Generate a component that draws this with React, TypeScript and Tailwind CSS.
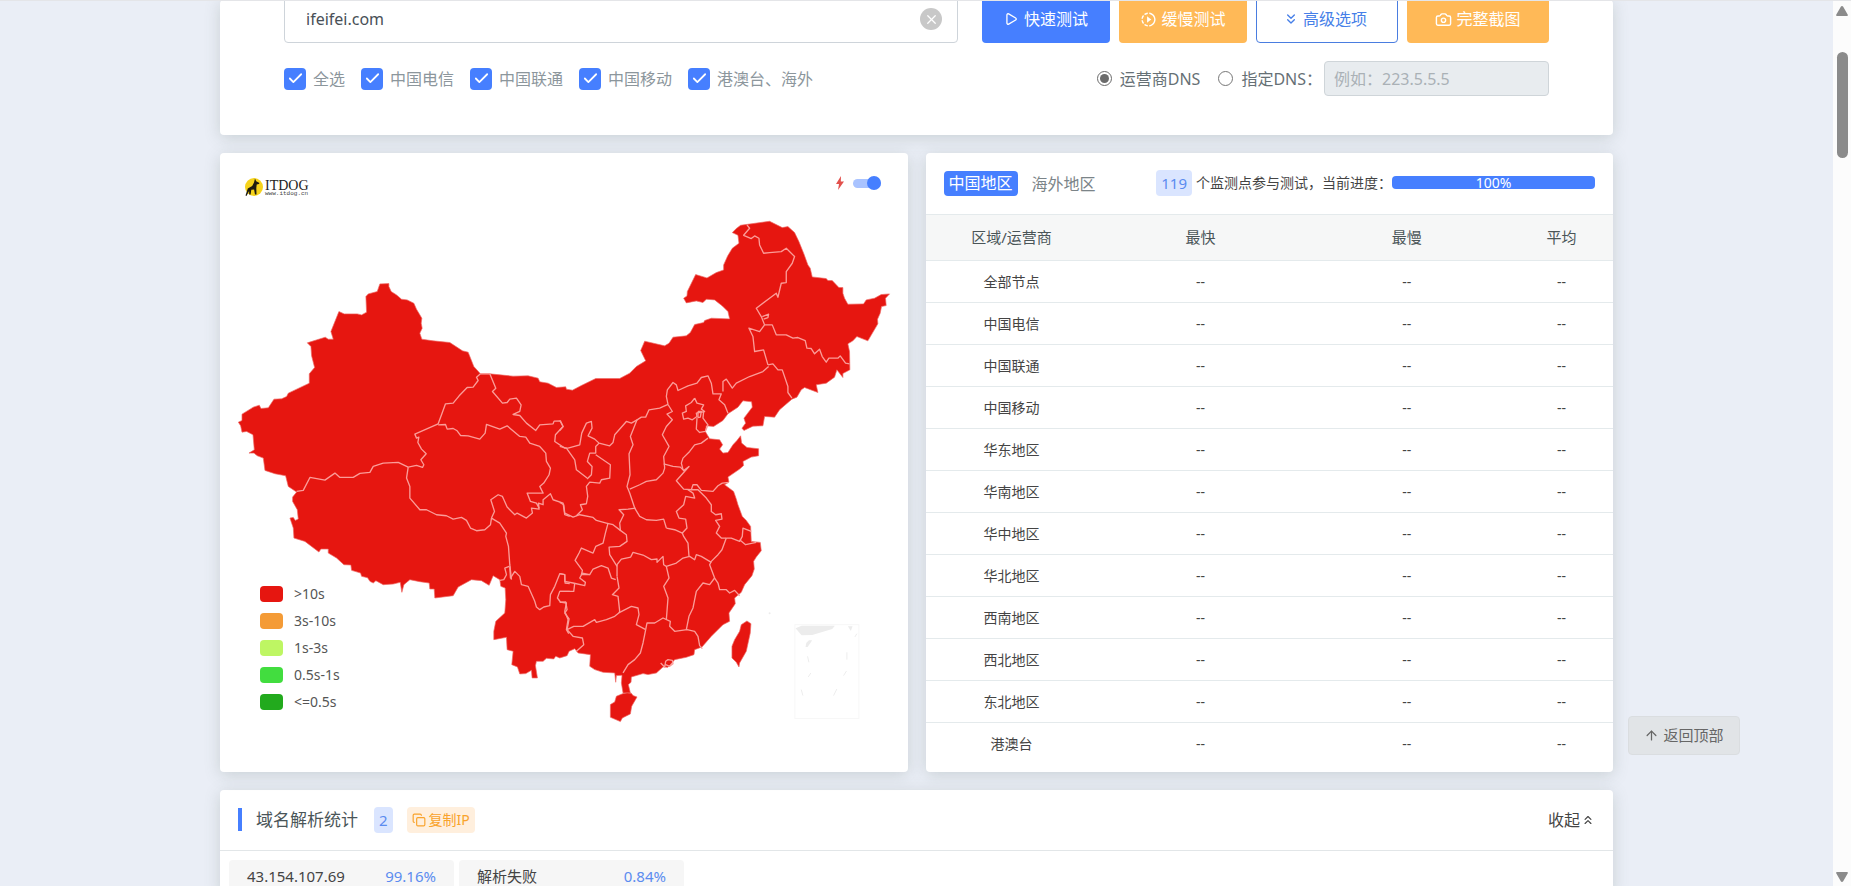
import { useState } from "react";
import { ArrowUp, Camera, Check, ChevronsDown, ChevronsUp, Copy, Play, X } from "lucide-react";
import { MdSlowMotionVideo } from "react-icons/md";

const carriers = ["全选", "中国电信", "中国联通", "中国移动", "港澳台、海外"];

const regions = [
    "全部节点",
    "中国电信",
    "中国联通",
    "中国移动",
    "华东地区",
    "华南地区",
    "华中地区",
    "华北地区",
    "西南地区",
    "西北地区",
    "东北地区",
    "港澳台",
];

const legend = [
    { label: ">10s", color: "bg-[#e61610]" },
    { label: "3s-10s", color: "bg-[#f49b36]" },
    { label: "1s-3s", color: "bg-[#bef663]" },
    { label: "0.5s-1s", color: "bg-[#42dd3f]" },
    { label: "<=0.5s", color: "bg-[#22aa1d]" },
];

const stats = [
    { name: "43.154.107.69", value: "99.16%" },
    { name: "解析失败", value: "0.84%" },
];

const mainland =
    "480,402 507,401 507,410 514,425 530,435 545,448 562,450 582,460 590,478 606,505 604,520 607,535 600,550 606,568 640,573 690,578 728,603 745,607 762,650 782,672 810,672 880,679 925,678 955,685 960,696 985,700 1010,713 1038,711 1040,718 1058,721 1085,707 1128,686 1200,686 1230,670 1250,650 1278,633 1263,602 1275,574 1335,588 1348,580 1360,562 1400,558 1412,548 1425,524 1452,518 1455,512 1475,505 1530,507 1525,485 1508,468 1485,450 1460,448 1450,458 1430,453 1400,459 1392,445 1402,438 1403,425 1428,374 1462,384 1490,368 1512,360 1512,345 1524,318 1538,295 1558,280 1555,256 1538,248 1550,236 1563,226 1650,214 1688,233 1705,230 1725,248 1738,275 1753,312 1765,345 1772,355 1778,381 1820,386 1825,392 1838,392 1858,413 1870,413 1870,430 1875,445 1885,463 1932,462 1940,450 1965,445 1985,434 2010,432 1998,445 2000,467 1986,470 1982,490 1974,508 1975,522 1945,573 1912,560 1900,573 1885,582 1890,605 1891,660 1870,671 1870,683 1852,660 1845,682 1820,700 1790,705 1795,728 1755,713 1745,720 1732,742 1717,748 1680,780 1665,802 1635,800 1630,828 1600,829 1573,842 1567,835 1578,820 1573,805 1598,772 1596,756 1570,753 1555,772 1525,792 1510,812 1482,830 1460,828 1457,845 1470,867 1500,870 1509,885 1500,898 1510,910 1525,908 1540,885 1552,872 1563,858 1566,880 1582,893 1617,897 1617,918 1595,922 1570,935 1572,947 1560,958 1525,982 1528,997 1515,1005 1542,1025 1550,1048 1555,1065 1568,1100 1580,1112 1593,1130 1595,1175 1622,1178 1625,1203 1610,1222 1602,1235 1604,1258 1597,1278 1575,1305 1565,1328 1545,1345 1547,1362 1528,1390 1530,1415 1510,1425 1475,1460 1447,1492 1425,1500 1423,1515 1400,1523 1365,1530 1345,1553 1330,1552 1310,1570 1285,1575 1270,1572 1235,1582 1234,1598 1226,1605 1232,1630 1210,1630 1205,1600 1207,1577 1190,1578 1188,1598 1185,1570 1150,1568 1125,1560 1110,1550 1112,1515 1075,1510 1065,1497 1048,1505 1042,1518 1020,1525 1008,1520 1002,1528 980,1526 970,1535 950,1535 947,1548 953,1585 937,1585 935,1562 918,1572 900,1573 893,1552 876,1545 880,1505 862,1500 860,1463 822,1470 822,1445 828,1415 855,1390 858,1350 856,1315 843,1310 840,1290 820,1278 808,1307 785,1293 755,1290 715,1312 700,1338 645,1345 643,1318 630,1318 628,1300 600,1296 570,1290 552,1305 546,1328 541,1298 520,1303 490,1305 468,1293 460,1300 450,1295 443,1284 425,1280 422,1270 395,1262 393,1246 372,1245 350,1225 325,1210 325,1198 303,1198 297,1207 255,1175 222,1165 220,1135 210,1105 220,1103 226,1112 235,1108 232,1080 218,1055 218,1042 230,1027 205,1010 197,978 165,972 135,962 130,925 112,918 102,910 87,910 103,900 99,855 80,845 66,847 62,828 55,817 66,812 66,793 100,772 118,766 123,776 145,774 162,748 185,747 200,740 205,730 268,700 268,672 284,653 275,618 273,590 262,579 316,562 325,568 340,568 333,545 357,485 373,492 412,492 425,495 440,487 438,440 445,432 472,425";

const hainan =
    "1210,1632 1190,1640 1185,1657 1172,1665 1172,1703 1202,1716 1208,1705 1232,1693 1236,1670 1252,1642 1240,1638 1235,1631 1222,1630";

const taiwan =
    "1582,1414 1594,1422 1592,1450 1580,1505 1560,1540 1558,1552 1550,1538 1537,1525 1537,1490 1545,1470 1560,1445 1565,1425";

const westBorders = [
    "782,672 770,682 775,692 760,712 742,713 718,738 700,760 677,762 665,795 655,822 585,853 590,865 597,862 594,878 605,898 619,912 603,930 612,945 608,953 590,947 565,952",
    "655,825 677,824 682,838 700,836 712,843 722,857 745,858 780,868 796,850 800,824 840,838 862,828 900,860 918,862 930,880 960,890 978,910 980,935 992,955 988,975 972,1000 960,1010 970,1030 922,1030 932,1055 950,1060 958,1075",
    "782,672 810,672 828,715 818,725 848,760 862,758 870,748 890,745 904,765 900,785 880,794 900,797 920,820 948,842 960,825 1000,822 1003,814 1022,813 1030,830 1007,855 1005,875 1035,895 1045,895",
    "230,1025 250,1022 270,983 315,991 345,970 360,983 400,983 420,971 450,968 460,950 490,940 535,938 565,952",
    "565,952 560,985 570,1010 570,1045 600,1080 620,1080 650,1095 680,1098 700,1108 725,1103 740,1112 752,1135 770,1143 795,1140 812,1125 815,1105",
    "815,1105 824,1085 813,1050 835,1035 848,1040 862,1072 885,1095 892,1090 920,1105 938,1090 935,1075 958,1078 956,1060 970,1065 970,1050 992,1032 1000,1050 1030,1060 1035,1095 1050,1100",
    "815,1105 840,1120 860,1150 858,1160 866,1190 870,1245 875,1290",
    "868,1250 855,1255 860,1275 852,1290 840,1292",
    "870,1250 872,1285 885,1265 900,1280 905,1305 925,1310 945,1355 950,1372 960,1380 972,1372 990,1368 992,1335 1005,1310 1020,1272 1035,1275 1036,1300 1050,1302",
    "1050,1325 1020,1325 1013,1345 1022,1357 1040,1360 1035,1385 1045,1410 1040,1440 1047,1452",
];

const eastBorders = [
    "25,895 60,885 66,850 80,820 95,815 97,835 85,858 105,868 118,880 150,888 160,878 165,855 200,815 215,820 232,810 245,802 258,802 268,780 300,775 325,764",
    "0,812 10,830 0,842",
    "0,890 20,895 45,930 50,960 82,985",
    "118,880 108,890 108,910 90,910 83,935 97,950 95,975 82,988",
    "108,915 152,945 150,985 125,990 120,1000 90,997 80,1010 84,1040 80,1062 62,1065 68,1080 50,1098",
    "232,810 212,860 220,885 208,912 211,975 202,1010 210,1030 225,1075 240,1100 260,1110 290,1112 312,1108 320,1135",
    "325,764 338,785 322,793 338,810 320,830 308,855 328,890 312,920 315,955 310,970 290,990 260,995 240,1005 210,1018",
    "325,764 320,740 323,720 340,698 350,705 355,722 385,708 412,700 425,683 445,678 455,700 460,732 485,732 478,750 495,765 505,790",
    "490,725 490,695 500,688 518,715 530,700 570,680 610,665 627,650",
    "625,645 640,642 655,660 668,660 685,710 685,728 697,745",
    "625,645 612,600 585,605 580,560 568,535 600,545 615,525 638,525 650,555 680,555 700,565 715,563 737,572 742,595 755,596 765,612 780,598 788,620 800,637 808,625 835,625 842,618 858,640 870,642",
    "615,525 605,500 590,475 650,430 655,442 665,400 680,398 680,365 698,340 705,320 680,295 665,305 630,308 612,310 600,285 598,265 585,258 575,266 552,256 570,235 562,225",
    "608,500 627,493 625,503 612,508",
    "405,745 395,758 378,768 380,785 368,790 372,808 385,805 398,810 412,800 410,790 435,785 425,778 432,765 412,760 405,745",
    "415,785 425,785 422,802 415,803 415,785",
    "432,785 430,805 445,825 437,845 420,848 410,838 412,805",
    "445,865 425,880 405,885 390,905 370,925 365,940 370,960",
    "312,942 340,950 362,952 372,962 388,950 350,993 372,1018 395,1020 400,1005 412,1005 425,1022 460,1025 475,1008 488,1000 508,998",
    "385,1020 400,1030 405,1045 378,1040 372,1065 350,1085 358,1105 378,1108 382,1135 368,1150 345,1140 320,1135",
    "395,1020 415,1020 440,1045 455,1065 455,1085 468,1095 485,1092 487,1108 468,1112 480,1130 470,1150 485,1165 500,1165",
    "500,1165 515,1165 540,1175 548,1160 550,1135 575,1145",
    "540,1170 558,1185 590,1178",
    "500,1165 487,1200 475,1215 455,1235 450,1245 465,1285",
    "228,1075 205,1078 178,1080 192,1095 180,1120 182,1142 200,1155 202,1175 180,1190 148,1192 150,1215 172,1250",
    "0,1058 12,1065 15,1090 40,1102 60,1095 100,1103 110,1112 140,1120 160,1125 182,1142",
    "145,1120 137,1150 130,1180 108,1190 100,1210 65,1195 58,1210 46,1232 68,1262 65,1275 90,1275 100,1258 125,1248 145,1255 155,1285 168,1290",
    "172,1280 172,1245 185,1228 213,1222 220,1208 250,1216 275,1230 292,1228 292,1238 310,1220 312,1245 320,1250 350,1240 370,1225 390,1220 405,1230 410,1215 425,1220 455,1238",
    "368,1150 372,1160 385,1180 388,1220",
    "172,1280 178,1315 158,1335 175,1340 180,1385 178,1390",
    "320,1250 328,1285 312,1310 325,1345 320,1410",
    "465,1285 450,1305 430,1300 410,1325 405,1350 400,1375 388,1400 380,1440",
    "465,1285 475,1300 480,1320 500,1320 510,1330 525,1322 540,1338",
    "0,1272 15,1275 15,1295 40,1300 75,1308 77,1298 60,1285 68,1270 90,1275",
    "0,1325 42,1325 45,1300",
    "0,1358 18,1357 22,1380 15,1390 28,1408 22,1440 42,1430 70,1430 105,1410 110,1418 140,1410 165,1400 180,1388 215,1370 235,1375 238,1395 230,1425 258,1440",
    "22,1440 40,1460 68,1465 72,1485 50,1505",
    "258,1440 250,1480 242,1510 225,1530 205,1545 190,1570",
    "258,1440 262,1420 285,1420 310,1405 332,1415 330,1430 345,1445 382,1440 405,1445 415,1460 420,1488 428,1497",
    "303,1540 315,1552 318,1535 325,1530 338,1532 340,1542 330,1550 318,1545",
];

function ChinaMap() {
    return (
        <svg viewBox="0 9 2064 1857" className="block w-full" role="img" aria-label="中国地图">
            <g fill="#e61610" stroke="#ee6a65" strokeWidth="2" strokeLinejoin="round">
                <polygon points={mainland} />
                <polygon points={hainan} />
                <polygon points={taiwan} />
            </g>
            <g fill="none" stroke="#fb9c98" strokeWidth="4" strokeLinejoin="round">
                {westBorders.map((points) => (
                    <polyline key={points} points={points} />
                ))}
                <g transform="translate(1020 0)">
                    {eastBorders.map((points) => (
                        <polyline key={points} points={points} />
                    ))}
                </g>
            </g>
            {/* South China Sea inset */}
            <g fill="#ececec">
                <rect x="1726" y="1425" width="192" height="282" fill="none" stroke="#f7f7f7" strokeWidth="3" />
                <path d="M1728 1436l18-8h100l-8 10-60 18-32 1zM1885 1430h14l-5 14zM1760 1480l8-8h10l-14 20h-6z" />
                <path
                    d="M1764 1520l4 18M1766 1582l8-12M1745 1620l5 18M1882 1508v22M1872 1578l9-14M1842 1638l10-20M1906 1462l6-10"
                    stroke="#ededed"
                    strokeWidth="3"
                />
                <circle cx="1650" cy="1391" r="3" />
            </g>
        </svg>
    );
}

function Logo() {
    return (
        <svg viewBox="0 0 66 20" className="h-5 w-[66px]" aria-label="ITDOG">
            <circle cx="9" cy="10" r="9" fill="#f6d31c" />
            <path
                d="M10 1.500l1.200 2.800 3.300 1.800-.6 1-2.200.5-.4 3.400.2 6.500H10l-.9-5-2.800.3-.7 4.700H4.200l-.1-3.400L1.500 19l-1-.5 2.300-7 4.400-2.500L9 5.500z"
                fill="#1d1a10"
            />
            <text x="20" y="13" fontSize="14" fill="#222" fontFamily="Liberation Serif, serif">
                ITDOG
            </text>
            <text x="20" y="18" fontSize="6" fill="#444" fontFamily="Liberation Mono, monospace">
                www.itdog.cn
            </text>
        </svg>
    );
}

const card = "rounded bg-white shadow-[0_3px_16px_rgba(85,105,95,0.22)]";

function SearchCard() {
    const [host, setHost] = useState("ifeifei.com");
    const [dns, setDns] = useState("isp");

    return (
        <section className={`${card} px-16 pb-[39px]`}>
            <div className="-mt-[5px] flex h-12 gap-6">
                <div className="relative flex-1">
                    <input
                        aria-label="域名"
                        value={host}
                        onChange={(e) => setHost(e.target.value)}
                        className="h-full w-full rounded border border-[#ced4da] px-[21px] text-base text-[#495057] outline-none"
                    />
                    <button
                        aria-label="清空"
                        onClick={() => setHost("")}
                        className="absolute top-[13px] right-4 flex size-[22px] items-center justify-center rounded-full bg-[#c8c8c8] text-white"
                    >
                        <X size={15} strokeWidth={2} />
                    </button>
                </div>
                <div className="flex gap-[9px] text-base">
                    <button className="flex w-32 items-center justify-center gap-1.5 rounded-sm bg-[#467fff] text-white">
                        <Play size={14} strokeWidth={2.2} />
                        快速测试
                    </button>
                    <button className="flex w-32 items-center justify-center gap-1 rounded-sm bg-[#ffb957] text-white">
                        <MdSlowMotionVideo size={17} />
                        缓慢测试
                    </button>
                    <button className="flex w-[142px] items-center justify-center gap-1 rounded-sm border border-[#4a7de0] pr-1 text-[#467fe8]">
                        <ChevronsDown size={16} />
                        高级选项
                    </button>
                    <button className="flex w-[142px] items-center justify-center gap-1 rounded-sm bg-[#ffb957] text-white">
                        <Camera size={17} />
                        完整截图
                    </button>
                </div>
            </div>

            <div className="mt-[18px] flex h-[35px] items-center justify-between text-base">
                <div className="flex gap-4 text-[#8c969c]">
                    {carriers.map((name) => (
                        <label key={name} className="flex items-center gap-[7px]">
                            <span className="grid size-[22px] place-items-center">
                                <input
                                    type="checkbox"
                                    defaultChecked
                                    className="peer col-start-1 row-start-1 size-[22px] appearance-none rounded-sm bg-[#467fff]"
                                />
                                <Check size={17} strokeWidth={2.5} className="pointer-events-none col-start-1 row-start-1 text-white" />
                            </span>
                            {name}
                        </label>
                    ))}
                </div>
                <div className="flex items-center text-[#667075]">
                    <label className="flex items-center gap-2">
                        <input
                            type="radio"
                            name="dns"
                            checked={dns === "isp"}
                            onChange={() => setDns("isp")}
                            className="size-[15px] accent-[#6b6b6b]"
                        />
                        运营商DNS
                    </label>
                    <label className="mr-0.5 ml-[18px] flex items-center gap-2">
                        <input
                            type="radio"
                            name="dns"
                            checked={dns === "custom"}
                            onChange={() => setDns("custom")}
                            className="size-[15px] accent-[#6b6b6b]"
                        />
                        指定DNS：
                    </label>
                    <input
                        aria-label="DNS"
                        disabled={dns !== "custom"}
                        placeholder="例如：223.5.5.5"
                        className="h-[35px] w-[225px] rounded border border-[#cfd5d9] bg-[#e8ecef] px-[9px] placeholder:text-[#aab1b6]"
                    />
                </div>
            </div>
        </section>
    );
}

function MapCard() {
    return (
        <section className={`${card} relative`}>
            <ChinaMap />
            <div className="absolute top-6 left-[25px]">
                <Logo />
            </div>
            <label className="absolute top-[23px] right-[27px] flex items-center gap-[9px]">
                <svg width="8" height="14" viewBox="0 0 8 14" fill="#e2504c">
                    <path d="M5 0L0 8h3l-1 6 6-8.500H4.800z" />
                </svg>
                <input type="checkbox" role="switch" defaultChecked aria-label="快速模式" className="peer sr-only" />
                <span className="flex h-[9px] w-7 items-center justify-end rounded-full bg-[#a9c3ff]">
                    <span className="size-3.5 rounded-full bg-[#467fff]" />
                </span>
            </label>
            <ul className="absolute bottom-14 left-10 text-sm text-[#555]">
                {legend.map((item) => (
                    <li key={item.label} className="flex h-[27px] items-center gap-[11px]">
                        <span className={`h-4 w-[23px] rounded ${item.color}`} />
                        {item.label}
                    </li>
                ))}
            </ul>
        </section>
    );
}

function ResultCard() {
    return (
        <section className={`${card} overflow-hidden`}>
            <div className="flex h-[61px] items-center justify-between px-[18px]">
                <div className="flex items-center gap-[9px] text-base">
                    <button className="h-[25px] rounded bg-[#467fff] px-[5px] leading-[25px] text-white">中国地区</button>
                    <button className="px-[5px] text-[#7b8488]">海外地区</button>
                </div>
                <div className="flex items-center pb-0.5 text-sm text-[#444]">
                    <span className="mr-1 rounded bg-[#dae5ff] px-[5px] text-[15px] leading-[26px] text-[#5b8cf0]">119</span>
                    个监测点参与测试，当前进度：
                    <div
                        role="progressbar"
                        aria-valuenow={100}
                        className="h-[13px] w-[203px] rounded bg-[#467fff] text-center leading-[13px] text-white"
                    >
                        100%
                    </div>
                </div>
            </div>
            <table className="w-full table-fixed text-center text-sm text-[#444]">
                <thead>
                    <tr className="h-[46px] border-t border-[#e4eaec] bg-[#f6f7f7] text-[15px] text-[#4a5558]">
                        <th className="w-[25%] font-normal">区域/运营商</th>
                        <th className="w-[30%] font-normal">最快</th>
                        <th className="w-[30%] font-normal">最慢</th>
                        <th className="w-[15%] font-normal">平均</th>
                    </tr>
                </thead>
                <tbody>
                    {regions.map((name) => (
                        <tr key={name} className="h-[42px] border-t border-[#e4eaec]">
                            <td>{name}</td>
                            <td>--</td>
                            <td>--</td>
                            <td>--</td>
                        </tr>
                    ))}
                </tbody>
            </table>
        </section>
    );
}

function ResolveCard() {
    return (
        <section className={`${card} flex-1`}>
            <div className="flex h-[61px] items-center border-b border-[#e2e6e8] px-[18px]">
                <span className="h-[23px] w-1 bg-[#467fff]" />
                <h2 className="ml-3.5 text-[17px] text-[#4a5558]">域名解析统计</h2>
                <span className="ml-4 rounded bg-[#dae5ff] px-[5px] text-[15px] leading-[26px] text-[#5b8cf0]">2</span>
                <button className="ml-3.5 flex h-[26px] items-center gap-[3px] rounded bg-[#ffefdd] px-[5px] text-sm text-[#f9a32b]">
                    <Copy size={14} />
                    复制IP
                </button>
                <button className="ml-auto flex items-center gap-px text-base text-[#444]">
                    收起
                    <ChevronsUp size={14} />
                </button>
            </div>
            <ul className="flex gap-[5px] px-[9px] pt-[9px]">
                {stats.map((item) => (
                    <li
                        key={item.name}
                        className="flex h-[34px] w-[225px] items-center justify-between rounded bg-[#f6f6f6] px-[18px] text-[15px] text-[#444]"
                    >
                        {item.name}
                        <span className="text-[#5b8cf0]">{item.value}</span>
                    </li>
                ))}
            </ul>
        </section>
    );
}

export default function App() {
    return (
        <div className="flex h-screen overflow-hidden bg-[#eaeef6] font-['Noto_Sans','Noto_Sans_CJK_SC',sans-serif]">
            <main className="min-w-0 flex-1">
                <div className="mx-auto flex h-full max-w-[1393px] flex-col gap-[18px]">
                    <SearchCard />
                    <div className="grid grid-cols-2 gap-[18px]">
                        <MapCard />
                        <ResultCard />
                    </div>
                    <ResolveCard />
                </div>
            </main>

            {/* Scrollbar */}
            <div className="flex w-[18px] shrink-0 flex-col items-center bg-[#fcfcfc] pt-1.5 pb-1">
                <svg width="12" height="10" viewBox="0 0 12 10" fill="#8b8b8b">
                    <path d="M6 0q.8 0 1.200.7l4.600 8q.4 1.300-.8 1.300H1q-1.200 0-.8-1.300l4.600-8Q5.200 0 6 0z" />
                </svg>
                <span className="mt-9 h-[106px] w-[11px] rounded-full bg-[#8b8b8b]" />
                <svg width="12" height="10" viewBox="0 0 12 10" fill="#8b8b8b" className="mt-auto">
                    <path d="M6 10q.8 0 1.200-.7l4.600-8Q12.200 0 11 0H1Q-.2 0 .2 1.300l4.600 8q.4.7 1.200.7z" />
                </svg>
            </div>

            <a
                href="#top"
                className="fixed right-[111px] bottom-[131px] flex h-[39px] w-28 items-center justify-center gap-1 rounded-sm border border-[#dadde0] bg-[#e1e4e7] text-[15px] text-[#666]"
            >
                <ArrowUp size={15} />
                返回顶部
            </a>
            <div className="fixed inset-x-0 top-0 h-px bg-[#e4e5e8]" />
        </div>
    );
}
